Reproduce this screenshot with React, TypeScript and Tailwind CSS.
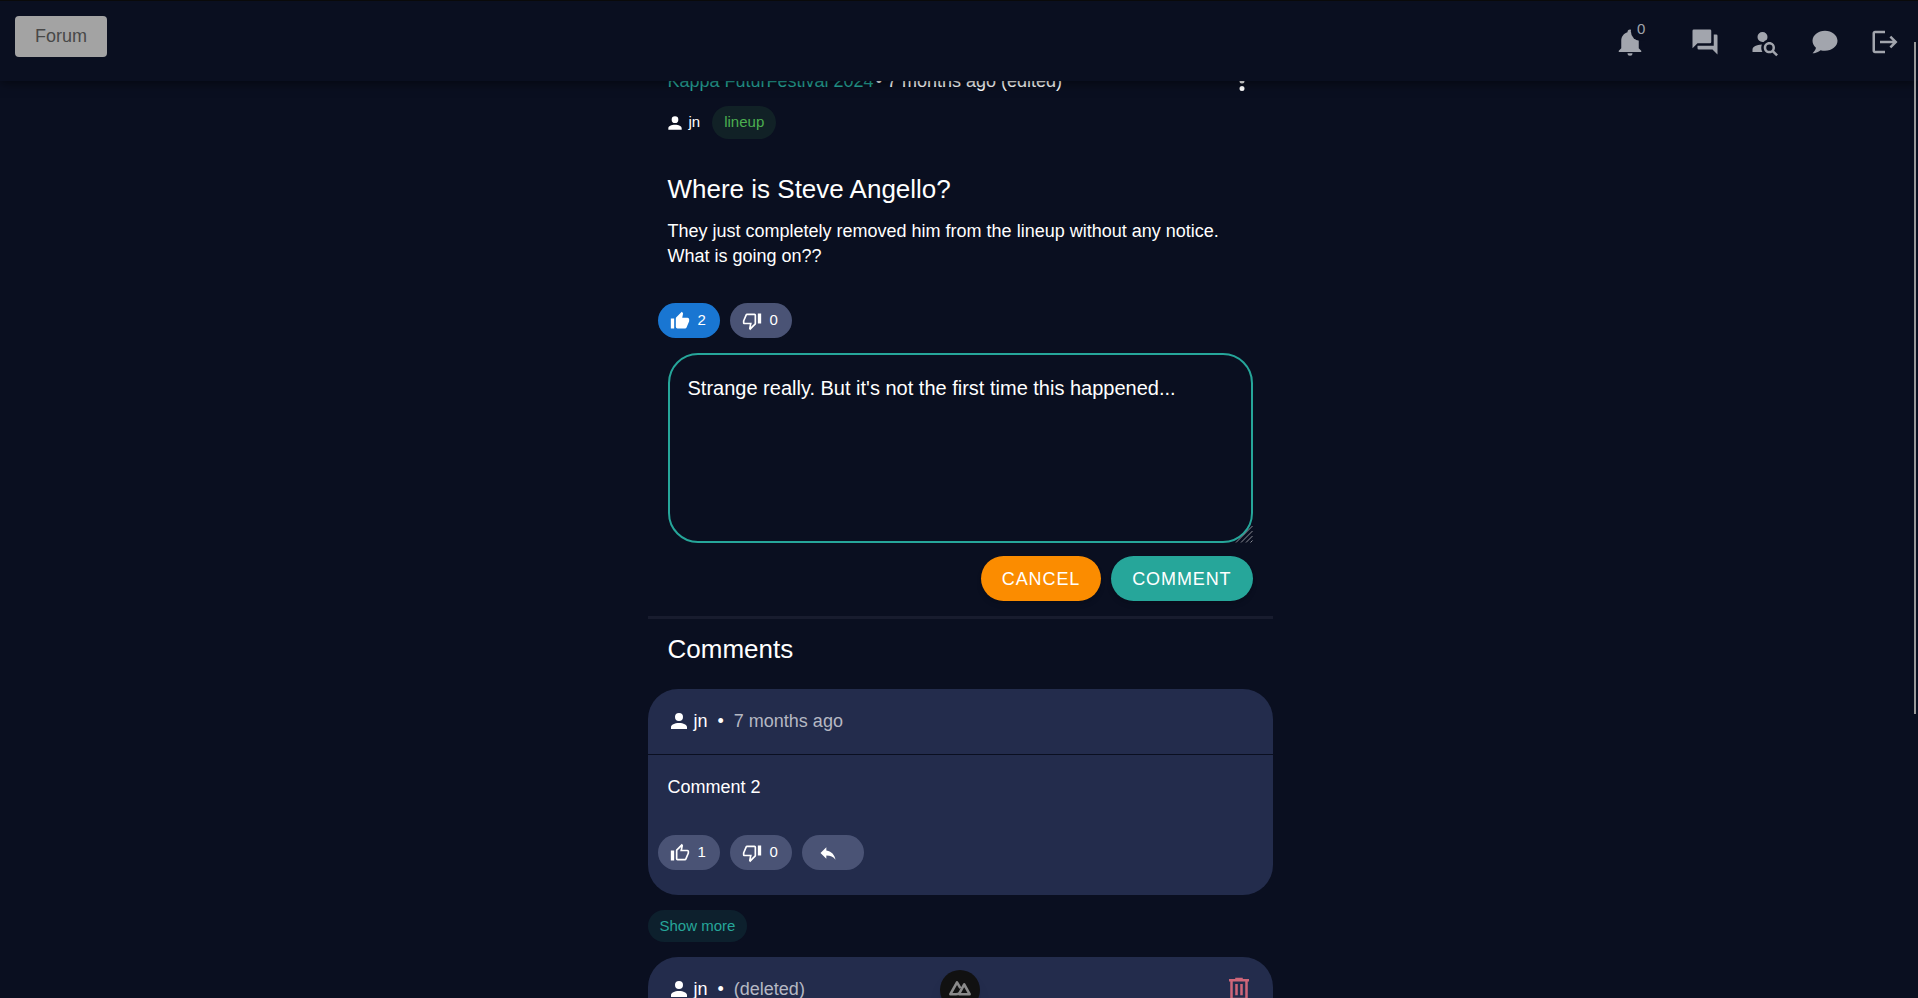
import type { ReactNode } from "react";

const icons = {
  bell: "M21,19V20H3V19L5,17V11C5,7.9 7.03,5.17 10,4.29C10,4.19 10,4.1 10,4A2,2 0 0,1 12,2A2,2 0 0,1 14,4C14,4.1 14,4.19 14,4.29C16.97,5.17 19,7.9 19,11V17L21,19M14,21A2,2 0 0,1 12,23A2,2 0 0,1 10,21",
  forum: "M17,12V3A1,1 0 0,0 16,2H3A1,1 0 0,0 2,3V17L6,13H16A1,1 0 0,0 17,12M21,6H19V15H6V17A1,1 0 0,0 7,18H18L22,22V7A1,1 0 0,0 21,6Z",
  accountSearch: "M15.5,12C18,12 20,14 20,16.5C20,17.38 19.75,18.21 19.31,18.9L22.39,22L21,23.39L17.88,20.32C17.19,20.75 16.37,21 15.5,21C13,21 11,19 11,16.5C11,14 13,12 15.5,12M15.5,14A2.5,2.5 0 0,0 13,16.5A2.5,2.5 0 0,0 15.5,19A2.5,2.5 0 0,0 18,16.5A2.5,2.5 0 0,0 15.5,14M10,4A4,4 0 0,1 14,8C14,8.91 13.69,9.75 13.18,10.43C12.32,10.75 11.55,11.26 10.91,11.9L10,12A4,4 0 0,1 6,8A4,4 0 0,1 10,4M2,20V18C2,15.88 5.31,14.14 9.5,14C9.18,14.78 9,15.62 9,16.5C9,17.79 9.38,19 10,20H2Z",
  chat: "M12,3C17.5,3 22,6.58 22,11C22,15.42 17.5,19 12,19C10.76,19 9.57,18.82 8.47,18.5C5.55,21 2,21 2,21C4.33,18.67 4.7,17.1 4.75,16.5C3.05,15.07 2,13.13 2,11C2,6.58 6.5,3 12,3Z",
  logout: "M17 7L15.59 8.41L18.17 11H8V13H18.17L15.59 15.58L17 17L22 12M4 5H12V3H4C2.9 3 2 3.9 2 5V19C2 20.1 2.9 21 4 21H12V19H4V5Z",
  account: "M12,4A4,4 0 0,1 16,8A4,4 0 0,1 12,12A4,4 0 0,1 8,8A4,4 0 0,1 12,4M12,14C16.42,14 20,15.79 20,18V20H4V18C4,15.79 7.58,14 12,14Z",
  dots: "M12,16A2,2 0 0,1 14,18A2,2 0 0,1 12,20A2,2 0 0,1 10,18A2,2 0 0,1 12,16M12,10A2,2 0 0,1 14,12A2,2 0 0,1 12,14A2,2 0 0,1 10,12A2,2 0 0,1 12,10M12,4A2,2 0 0,1 14,6A2,2 0 0,1 12,8A2,2 0 0,1 10,6A2,2 0 0,1 12,4Z",
  thumbUp: "M23,10C23,8.89 22.1,8 21,8H14.68L15.64,3.43C15.66,3.33 15.67,3.22 15.67,3.11C15.67,2.7 15.5,2.32 15.23,2.05L14.17,1L7.59,7.58C7.22,7.95 7,8.45 7,9V19A2,2 0 0,0 9,21H18C18.83,21 19.54,20.5 19.84,19.78L22.86,12.73C22.95,12.5 23,12.26 23,12V10M1,21H5V9H1V21Z",
  thumbUpOutline: "M5,9V21H1V9H5M9,21A2,2 0 0,1 7,19V9C7,8.45 7.22,7.95 7.59,7.59L14.17,1L15.23,2.06C15.5,2.33 15.67,2.7 15.67,3.11L15.64,3.43L14.69,8H21C22.11,8 23,8.9 23,10V12C23,12.26 22.95,12.5 22.86,12.73L19.84,19.78C19.54,20.5 18.83,21 18,21H9M9,19H18.03L21,12V10H12.21L13.34,4.68L9,9.03V19Z",
  thumbDownOutline: "M19,15V3H23V15H19M15,3A2,2 0 0,1 17,5V15C17,15.55 16.78,16.05 16.41,16.41L9.83,23L8.77,21.94C8.5,21.67 8.33,21.3 8.33,20.88L8.36,20.57L9.31,16H3C1.89,16 1,15.1 1,14V12C1,11.74 1.05,11.5 1.14,11.27L4.16,4.22C4.46,3.5 5.17,3 6,3H15M15,5H5.97L3,12V14H11.78L10.65,19.32L15,14.97V5Z",
  reply: "M10,9V5L3,12L10,19V14.9C15,14.9 18.5,16.5 21,20C20,15 17,10 10,9Z",
  trash: "M9,3V4H4V6H5V19A2,2 0 0,0 7,21H17A2,2 0 0,0 19,19V6H20V4H15V3H9M7,6H17V19H7V6M9,8V17H11V8H9M13,8V17H15V8H13Z",
};

function Icon({ name, className, children }: { name: keyof typeof icons; className: string; children?: ReactNode }) {
  return (
    <svg viewBox="0 0 24 24" fill="currentColor" aria-hidden="true" className={`shrink-0 ${className}`}>
      <path d={icons[name]} />
      {children}
    </svg>
  );
}

function NavButton({ name, label, children }: { name: keyof typeof icons; label: string; children?: ReactNode }) {
  return (
    <button type="button" aria-label={label} className="flex size-[60px] items-center justify-center">
      <Icon name={name} className="size-[30px]">{children}</Icon>
    </button>
  );
}

function Pill({ icon, label, active, children }: { icon: keyof typeof icons; label: string; active?: boolean; children?: ReactNode }) {
  return (
    <button
      type="button"
      aria-label={label}
      className={`flex h-[35px] w-[62px] items-center gap-2 rounded-full text-[15px] text-white ${children ? "pl-3" : "pl-4"} ${active ? "bg-[#1976d2]" : "bg-[#4a5375]"}`}
    >
      <Icon name={icon} className="size-5" />
      {children}
    </button>
  );
}

function CommentHead({ name, note }: { name: string; note: string }) {
  return (
    <div className="flex items-center text-lg leading-6">
      <Icon name="account" className="mr-[3px] size-6" />
      <span>{name}</span>
      <span className="mx-[10px]">•</span>
      <span className="text-[#b5b8c3]">{note}</span>
    </div>
  );
}

export default function App() {
  return (
    <div className="relative h-screen overflow-hidden bg-[#0a0f20] font-['Liberation_Sans',Arial,sans-serif] text-white">
      <header className="relative z-10 flex h-[81px] items-start justify-between border-t border-[#0a0a0a] bg-[#0a0f20] pr-[3px] pl-[15px] shadow-[0_2px_10px_rgba(0,0,0,0.5)]">
        <button type="button" className="mt-[15px] h-[41px] rounded bg-[#a3a3a3] px-5 pb-[2px] text-lg leading-none text-[#484848]">
          Forum
        </button>
        <nav className="mt-[11px] flex text-[#a2a5ad]">
          <div className="relative mr-[15px]">
            <NavButton name="bell" label="Notifications">
              <circle cx="20.5" cy="3.4" r="7.8" className="fill-[#0a0f20]" />
            </NavButton>
            <span className="absolute top-[7px] left-[37px] text-[15px] leading-5">0</span>
          </div>
          <NavButton name="forum" label="Forum" />
          <NavButton name="accountSearch" label="Find people" />
          <NavButton name="chat" label="Messages" />
          <NavButton name="logout" label="Log out" />
        </nav>
      </header>

      <div className="pl-[2px]">
        <main className="mx-auto w-full max-w-[625px]">
          <article className="px-5">
            <div className="-mt-3 flex h-6 items-center text-lg leading-6">
              <a href="#festival" className="text-[#26a69a]">Kappa FuturFestival 2024</a>
              <span className="ml-[2px]">• 7 months ago (edited)</span>
              <button type="button" aria-label="More actions" className="-mr-1 ml-auto">
                <Icon name="dots" className="size-[30px]" />
              </button>
            </div>
            <div className="mt-[13px] flex items-center text-[15px]">
              <Icon name="account" className="mr-1 -ml-[3px] size-5" />
              <span>jn</span>
              <span className="ml-3 flex h-[33px] items-center rounded-full bg-[#112126] px-3 text-[#4caf50]">lineup</span>
            </div>
            <h1 className="mt-[34px] text-[26px] leading-8">Where is Steve Angello?</h1>
            <p className="mt-[14px] text-lg leading-[25px]">
              They just completely removed him from the lineup without any notice.
              <br />
              What is going on??
            </p>
          </article>

          <div className="mt-[34px] flex gap-[10px] px-[10px]">
            <Pill icon="thumbUp" label="Like, 2" active>2</Pill>
            <Pill icon="thumbDownOutline" label="Dislike, 0">0</Pill>
          </div>

          <form className="mt-[15px] px-5">
            <div className="relative">
              <textarea
                aria-label="Your comment"
                defaultValue="Strange really. But it's not the first time this happened..."
                className="block h-[190px] w-full resize-none rounded-[30px] border-2 border-[#26a69a] bg-transparent px-[18px] py-5 text-xl leading-[26px] outline-none"
              />
              <svg viewBox="0 0 18 18" className="pointer-events-none absolute right-0 bottom-0 size-[18px] text-[#8b8d94]" stroke="currentColor" strokeWidth="1" aria-hidden="true">
                <path d="M1 17.5L17.5 1M6 17.5L17.5 6M11 17.5L17.5 11M15.5 17.5L17.5 15.5" />
              </svg>
            </div>
            <div className="mt-[13px] flex justify-end gap-[10px] text-lg tracking-wider">
              <button type="button" className="h-[45px] rounded-full bg-[#fb8c00] px-[21px] shadow-md">CANCEL</button>
              <button type="button" className="h-[45px] rounded-full bg-[#26a69a] px-[21px] shadow-md">COMMENT</button>
            </div>
          </form>

          <section className="mt-[15px] border-t-3 border-[#181c2e]">
            <h2 className="mt-[14px] px-5 text-[26px] leading-8">Comments</h2>
            <div className="mt-6 rounded-[30px] bg-[#232c4c]">
              <div className="border-b border-[#0a0f20] px-[19px] pt-5 pb-[21px]">
                <CommentHead name="jn" note="7 months ago" />
              </div>
              <p className="px-5 pt-5 text-lg leading-6">Comment 2</p>
              <div className="mt-9 flex gap-[10px] px-[10px] pb-[25px]">
                <Pill icon="thumbUpOutline" label="Like, 1">1</Pill>
                <Pill icon="thumbDownOutline" label="Dislike, 0">0</Pill>
                <Pill icon="reply" label="Reply" />
              </div>
            </div>
            <button type="button" className="mt-[15px] block h-8 rounded-full bg-[#0d202d] px-3 text-[15px] text-[#26a69a]">Show more</button>
            <div className="mt-[15px] flex items-center justify-between rounded-t-[30px] bg-[#232c4c] px-[19px] pt-5 pb-[21px]">
              <CommentHead name="jn" note="(deleted)" />
              <button type="button" aria-label="Delete comment" className="-my-[3px] text-[#cf6679]">
                <Icon name="trash" className="size-[30px]" />
              </button>
            </div>
          </section>
        </main>
      </div>

      <div className="absolute inset-x-0 top-[970px] flex justify-center pl-[2px]">
        <button type="button" aria-label="Developer tools" className="flex size-10 justify-center rounded-full bg-[#111] pt-[10px] text-[#8a8a8a] shadow-lg">
          <svg viewBox="0 0 24 16" className="h-4 w-6" fill="none" stroke="currentColor" strokeWidth="2.6" strokeLinejoin="round" aria-hidden="true">
            <path d="M8 14.2H2.4L9 2.4l3.4 5.8M11 14.2h10.6L16.2 4.4l-4.6 8.4Q11 14.2 8 14.2" />
          </svg>
        </button>
      </div>
      <div className="absolute top-[42px] right-[2px] z-20 h-[672px] w-[2px] bg-[#999]" />
    </div>
  );
}
